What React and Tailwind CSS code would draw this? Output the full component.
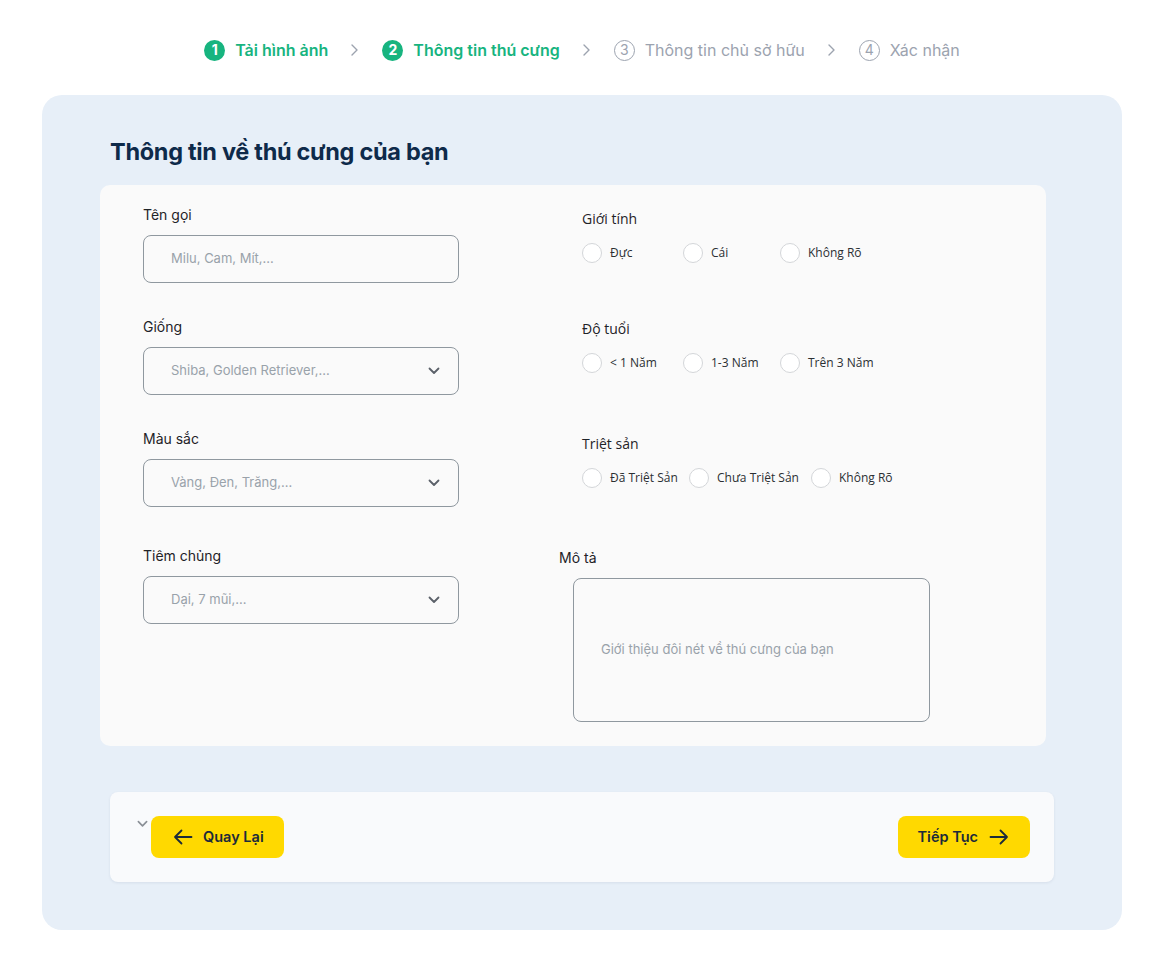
import React from "react";

const Chevron = ({ className = "" }) => (
  <svg className={className} width="10" height="14" viewBox="0 0 10 14" fill="none">
    <path d="M2 2l5 5-5 5" stroke="currentColor" strokeWidth="1.4" strokeLinecap="round" strokeLinejoin="round" />
  </svg>
);

const ChevronDown = ({ className = "" }) => (
  <svg className={className} width="12" height="8" viewBox="0 0 12 8" fill="none">
    <path d="M1.5 1.5L6 6l4.5-4.5" stroke="currentColor" strokeWidth="1.8" strokeLinecap="round" strokeLinejoin="round" />
  </svg>
);

const ArrowLeft = () => (
  <svg width="20" height="16" viewBox="0 0 20 16" fill="none">
    <path d="M18.5 8H2M8.5 1.5L2 8l6.5 6.5" stroke="#1c2b3a" strokeWidth="1.8" strokeLinecap="round" strokeLinejoin="round" />
  </svg>
);

const ArrowRight = () => (
  <svg width="20" height="16" viewBox="0 0 20 16" fill="none">
    <path d="M1.5 8H18M11.5 1.5L18 8l-6.5 6.5" stroke="#1c2b3a" strokeWidth="1.8" strokeLinecap="round" strokeLinejoin="round" />
  </svg>
);

function Step({ n, label, active }) {
  return (
    <div className="flex items-center gap-[10px]">
      {active ? (
        <div className="w-[21px] h-[21px] rounded-full bg-[#17b47f] text-white flex items-center justify-center text-[14px] font-bold leading-none">
          {n}
        </div>
      ) : (
        <div className="w-[21px] h-[21px] rounded-full border-[1.5px] border-[#9ca3af] text-[#9ca3af] flex items-center justify-center text-[14px] leading-none">
          {n}
        </div>
      )}
      <span
        className={
          active
            ? "text-[16px] font-semibold text-[#17b47f]"
            : "text-[16px] text-[#9ca3af]"
        }
      >
        {label}
      </span>
    </div>
  );
}

function Field({ label, placeholder, select, className = "" }) {
  return (
    <div className={className}>
      <div className="text-[14px] leading-[20px] text-[#1f2328]">{label}</div>
      <div className="mt-[10px] w-[316px] h-[48px] rounded-[8px] border border-[#8f989f] flex items-center justify-between pl-[27px] pr-[18px]">
        <span className="text-[13px] text-[#99a2aa]">{placeholder}</span>
        {select && <ChevronDown className="text-[#5b6169]" />}
      </div>
    </div>
  );
}

function Radio({ label, w }) {
  return (
    <div className={`flex items-center gap-[8px] ${w}`}>
      <div className="w-[20px] h-[20px] rounded-full border border-[#d4d6d9] bg-white shrink-0" />
      <span className="text-[12px] text-[#2b2f33] whitespace-nowrap" style={{ fontFamily: "'Open Sans', sans-serif" }}>
        {label}
      </span>
    </div>
  );
}

function RadioGroup({ label, options, className = "", widths }) {
  return (
    <div className={className}>
      <div className="text-[14px] leading-[20px] text-[#1f2328]" style={{ fontFamily: "'Open Sans', sans-serif" }}>
        {label}
      </div>
      <div className="mt-[14px] flex items-center">
        {options.map((o, i) => (
          <Radio key={o} label={o} w={widths[i]} />
        ))}
      </div>
    </div>
  );
}

export default function App() {
  return (
    <div className="w-[1158px] min-h-[962px] bg-white pt-[38px] pb-[32px]" style={{ fontFamily: "Inter, 'Noto Sans', sans-serif" }}>
      {/* Stepper */}
      <div className="h-[24px] flex items-center justify-center pl-[6px]">
        <Step n="1" label="Tải hình ảnh" active />
        <Chevron className="mx-[22px] text-[#9ca3af]" />
        <Step n="2" label="Thông tin thú cưng" active />
        <Chevron className="mx-[22px] text-[#9ca3af]" />
        <Step n="3" label="Thông tin chủ sở hữu" />
        <Chevron className="mx-[22px] text-[#9ca3af]" />
        <Step n="4" label="Xác nhận" />
      </div>

      {/* Panel */}
      <div className="ml-[42px] mt-[33px] w-[1080px] h-[835px] rounded-[20px] bg-[#e7eff8] pt-[41px]">
        <h1 className="ml-[68px] text-[23.5px] leading-[32px] font-bold text-[#0e2a4a] tracking-[-0.3px]">
          Thông tin về thú cưng của bạn
        </h1>

        {/* Form card */}
        <div className="ml-[58px] mt-[17px] w-[946px] h-[561px] rounded-[10px] bg-[#fafafa] flex">
          <div className="w-[459px] pl-[43px] pt-[20px]">
            <Field label="Tên gọi" placeholder="Milu, Cam, Mít,..." />
            <Field className="mt-[34px]" label="Giống" placeholder="Shiba, Golden Retriever,..." select />
            <Field className="mt-[34px]" label="Màu sắc" placeholder="Vàng, Đen, Trăng,..." select />
            <Field className="mt-[39px]" label="Tiêm chủng" placeholder="Dại, 7 mũi,..." select />
          </div>
          <div className="flex-1 pt-[24px]">
            <RadioGroup
              className="ml-[23px]"
              label="Giới tính"
              options={["Đực", "Cái", "Không Rõ"]}
              widths={["w-[101px]", "w-[97px]", ""]}
            />
            <RadioGroup
              className="ml-[23px] mt-[56px]"
              label="Độ tuổi"
              options={["< 1 Năm", "1-3 Năm", "Trên 3 Năm"]}
              widths={["w-[101px]", "w-[97px]", ""]}
            />
            <RadioGroup
              className="ml-[23px] mt-[61px]"
              label="Triệt sản"
              options={["Đã Triệt Sản", "Chưa Triệt Sản", "Không Rõ"]}
              widths={["w-[107px]", "w-[122px]", ""]}
            />
            <div className="mt-[60px]">
              <div className="text-[14px] leading-[20px] text-[#1f2328]">Mô tả</div>
              <div className="mt-[10px] ml-[14px] w-[357px] h-[144px] rounded-[8px] border border-[#8f989f] flex items-center pl-[27px]">
                <span className="text-[13px] text-[#99a2aa]">Giới thiệu đôi nét về thú cưng của bạn</span>
              </div>
            </div>
          </div>
        </div>

        {/* Footer */}
        <div className="ml-[68px] mt-[46px] w-[944px] h-[90px] rounded-[8px] bg-[#f9fafc] shadow-[0_1px_3px_rgba(15,40,80,0.08)] flex items-start justify-between pl-[27px] pr-[24px] pt-[24px]">
          <div className="flex items-start">
            <ChevronDown className="mt-[4px] mr-[3px] text-[#8a8f96] w-[11px] h-[8px]" />
            <button className="h-[42px] rounded-[8px] bg-[#ffd900] flex items-center pl-[22px] pr-[20px] gap-[10px]">
              <ArrowLeft />
              <span className="text-[14.5px] font-semibold text-[#1c2b3a]">Quay Lại</span>
            </button>
          </div>
          <button className="h-[42px] rounded-[8px] bg-[#ffd900] flex items-center pl-[20px] pr-[21px] gap-[11px]">
            <span className="text-[14.5px] font-semibold text-[#1c2b3a]">Tiếp Tục</span>
            <ArrowRight />
          </button>
        </div>
      </div>
    </div>
  );
}
